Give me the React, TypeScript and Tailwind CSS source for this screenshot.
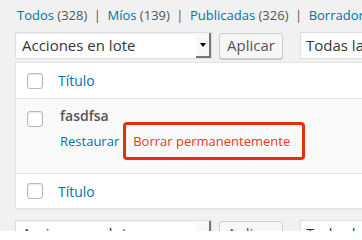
import React from "react";

function Checkbox() {
  return (
    <span className="block w-[16px] h-[16px] border border-[#b4b9be] rounded-[3px] bg-white shadow-[inset_0_1px_2px_rgba(0,0,0,0.1)]" />
  );
}

function BulkSelect({ label }: { label: string }) {
  return (
    <div className="flex h-[27px] w-[197px] bg-white border border-[#ddd] shadow-[inset_0_1px_2px_rgba(0,0,0,0.07)]">
      <div className="flex-1 pl-[6px] flex items-center text-[15px] text-[#32373c] whitespace-nowrap">{label}</div>
      <div className="w-[15px] flex items-center justify-center bg-[#f8f8f8] border-r-2 border-b-2 border-[#777]">
        <span className="block w-0 h-0 border-l-[3px] border-r-[3px] border-t-[4px] border-l-transparent border-r-transparent border-t-black" />
      </div>
    </div>
  );
}

function Controls({ label, apply, third }: { label: string; apply: string; third: string }) {
  return (
    <div className="flex items-center gap-[7px]">
      <BulkSelect label={label} />
      <button className="h-[26px] w-[64px] bg-[#f7f7f7] border border-[#ccc] rounded-[3px] shadow-[0_1px_0_#ccc] text-[15px] text-[#555]">
        {apply}
      </button>
      <div className="ml-[10px] h-[27px] w-[120px] bg-white border border-[#ddd] pl-[5px] flex items-center text-[15px] text-[#32373c] whitespace-nowrap">
        {third}
      </div>
    </div>
  );
}

export default function App() {
  const links = [
    ["Todos", "(328)"],
    ["Míos", "(139)"],
    ["Publicadas", "(326)"],
    ["Borradores", "(2)"],
  ];
  return (
    <div
      className="w-[362px] h-[231px] overflow-hidden bg-[#f1f1f1] pl-[15px] pt-[5px]"
      style={{ fontFamily: '"Open Sans", sans-serif' }}
    >
      <div className="w-[600px]">
        <div className="h-[20px] leading-[20px] text-[13px] whitespace-nowrap pl-[2px]">
          {links.map(([a, c], i) => (
            <React.Fragment key={a}>
              {i > 0 && <span className="text-[#555] mx-[6.5px]">|</span>}
              <span className="text-[#0073aa]">{a}</span>{" "}
              <span className="text-[#555]">{c}</span>
            </React.Fragment>
          ))}
        </div>
        <div className="mt-[7px]">
          <Controls label="Acciones en lote" apply="Aplicar" third="Todas las fechas" />
        </div>
        <div className="mt-[3px] bg-white border border-[#e5e5e5] shadow-[0_1px_1px_rgba(0,0,0,0.04)]">
          <div className="flex items-center h-[36px] border-b border-[#e1e1e1]">
            <div className="w-[42px] pl-[11px]">
              <Checkbox />
            </div>
            <span className="text-[14px] text-[#0073aa]">Título</span>
          </div>
          <div className="flex h-[75px] bg-[#f9f9f9] border-b border-[#e1e1e1]">
            <div className="w-[42px] pl-[11px] pt-[12px]">
              <Checkbox />
            </div>
            <div className="pl-[2px] pt-[7px]">
              <div className="text-[14px] font-semibold text-[#555] leading-[20px]">fasdfsa</div>
              <div className="mt-[5px] flex text-[13px] leading-[20px] whitespace-nowrap">
                <span className="text-[#0073aa]">Restaurar</span>
                <span className="relative ml-[14px] text-[#f2342b]">
                  Borrar permanentemente
                  <span className="absolute left-[-10px] right-[-15px] top-[-9px] bottom-[-9px] border-[3px] border-[#e2300a] rounded-[4px]" />
                </span>
              </div>
            </div>
          </div>
          <div className="flex items-center h-[34px]">
            <div className="w-[42px] pl-[11px]">
              <Checkbox />
            </div>
            <span className="text-[14px] text-[#0073aa]">Título</span>
          </div>
        </div>
        <div className="mt-[11px]">
          <Controls label="Acciones en lote" apply="Aplicar" third="Todas las fechas" />
        </div>
      </div>
    </div>
  );
}
